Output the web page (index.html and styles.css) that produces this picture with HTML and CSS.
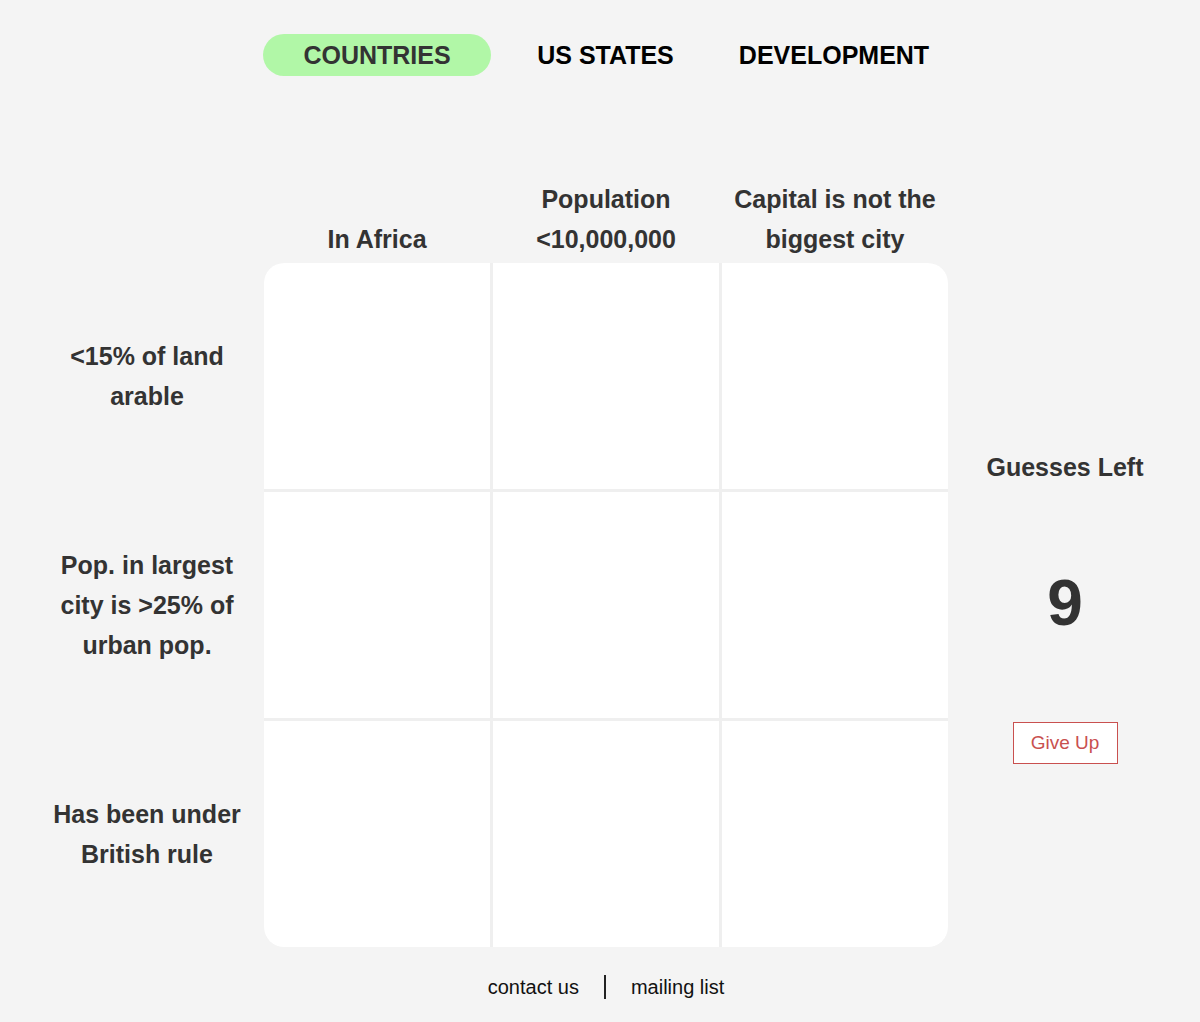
FILE: index.html
```html
<!DOCTYPE html>
<html lang="en">
<head>
<meta charset="utf-8">
<title>Grid Game</title>
<link rel="stylesheet" href="styles.css">
</head>
<body>
<div class="frame">
  <nav class="modes">
    <a class="mode active">COUNTRIES</a>
    <a class="mode">US STATES</a>
    <a class="mode">DEVELOPMENT</a>
  </nav>

  <div class="col-headers">
    <div class="col-head">In Africa</div>
    <div class="col-head">Population<br>&lt;10,000,000</div>
    <div class="col-head">Capital is not the<br>biggest city</div>
  </div>

  <div class="middle">
    <div class="row-labels">
      <div class="row-label">&lt;15% of land<br>arable</div>
      <div class="row-label">Pop. in largest<br>city is &gt;25% of<br>urban pop.</div>
      <div class="row-label">Has been under<br>British rule</div>
    </div>

    <div class="board">
      <div class="cell"></div><div class="cell"></div><div class="cell"></div>
      <div class="cell"></div><div class="cell"></div><div class="cell"></div>
      <div class="cell"></div><div class="cell"></div><div class="cell"></div>
    </div>

    <div class="side">
      <div class="guesses-title">Guesses Left</div>
      <div class="guesses-count">9</div>
      <button class="give-up">Give Up</button>
    </div>
  </div>

  <footer class="footer">
    <a class="foot-link">contact us</a>
    <span class="foot-sep"></span>
    <a class="foot-link">mailing list</a>
  </footer>
</div>
</body>
</html>
```

FILE: styles.css
```css
html, body {
  margin: 0;
  padding: 0;
  background: #f4f4f4;
}

body {
  font-family: "Liberation Sans", Arial, Helvetica, sans-serif;
  color: #333;
}

.frame {
  width: 1152px;
  margin-left: 30px;
  padding-top: 34px;
}

.modes {
  display: grid;
  grid-template-columns: 228px 227px 228px;
  column-gap: 1px;
  margin-left: 233px;
  width: 684px;
}

.mode {
  height: 42px;
  line-height: 42px;
  border-radius: 21px;
  text-align: center;
  font-size: 25px;
  font-weight: bold;
  color: #000;
  cursor: pointer;
}

.mode.active {
  background: #b1f7a7;
  color: #333;
}

.col-headers {
  display: grid;
  grid-template-columns: repeat(3, 226px);
  column-gap: 3px;
  margin-left: 234px;
  margin-top: 103px;
  height: 80px;
  align-items: end;
  margin-bottom: 4px;
}

.col-head {
  text-align: center;
  font-size: 25px;
  font-weight: bold;
  line-height: 40px;
}

.middle {
  display: flex;
}

.row-labels {
  width: 234px;
  display: grid;
  grid-template-rows: repeat(3, 226px);
  row-gap: 3px;
}

.row-label {
  display: flex;
  align-items: center;
  justify-content: center;
  text-align: center;
  font-size: 25px;
  font-weight: bold;
  line-height: 40px;
}

.board {
  width: 684px;
  height: 684px;
  display: grid;
  grid-template-columns: repeat(3, 226px);
  grid-template-rows: repeat(3, 226px);
  gap: 3px;
  border-radius: 20px;
  overflow: hidden;
  background: #efefef;
}

.cell {
  background: #fff;
}

.side {
  width: 234px;
  height: 684px;
  display: flex;
  flex-direction: column;
  align-items: center;
  justify-content: center;
  gap: 79px;
}

.guesses-title {
  font-size: 25px;
  font-weight: bold;
  line-height: 40px;
}

.guesses-count {
  font-size: 64px;
  font-weight: bold;
  line-height: 74px;
}

.give-up {
  font-family: "Liberation Sans", Arial, sans-serif;
  font-size: 19px;
  color: #c9504f;
  background: #fff;
  border: 1.5px solid #c9504f;
  width: 105px;
  height: 42px;
  padding: 0;
  margin-top: 3px;
  cursor: pointer;
}

.footer {
  margin-left: 234px;
  width: 684px;
  margin-top: 28px;
  display: flex;
  justify-content: center;
  align-items: center;
  font-size: 20px;
  color: #111;
}

.foot-link {
  line-height: 24px;
  cursor: pointer;
}

.foot-sep {
  display: block;
  width: 0;
  height: 24px;
  border-left: 2px solid #222;
  margin: 0 25px;
}
```
